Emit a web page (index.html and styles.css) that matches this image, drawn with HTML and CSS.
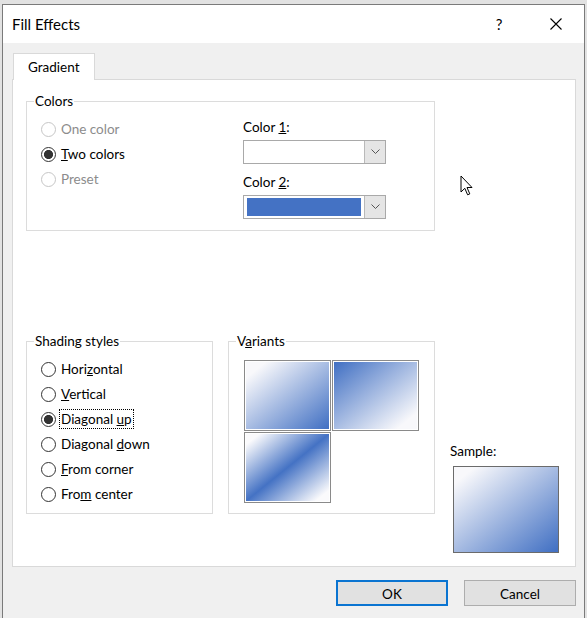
FILE: index.html
```html
<!DOCTYPE html>
<html lang="en">
<head>
    <meta charset="UTF-8">
    <title>Fill Effects</title>
    <link rel="stylesheet" href="styles.css">
</head>
<body>
    <div class="window">
        <div class="titlebar">
            <span class="title">Fill Effects</span>
            <span class="help">?</span>
            <svg class="close" width="12" height="12" viewBox="0 0 12 12">
                <path d="M0.5 0.5 L11.5 11.5 M11.5 0.5 L0.5 11.5" stroke="#000" stroke-width="1.1" fill="none"/>
            </svg>
        </div>

        <div class="content">
            <div class="tab">Gradient</div>

            <div class="panel">
                <fieldset class="group colors">
                    <legend>Colors</legend>
                    <div class="colors-body">
                        <div class="radios">
                            <div class="radio disabled"><span class="dot"></span>One color</div>
                            <div class="radio checked"><span class="dot"></span><span><u>T</u>wo colors</span></div>
                            <div class="radio disabled"><span class="dot"></span>Preset</div>
                        </div>
                        <div class="pickers">
                            <div class="field-label">Color <u>1</u>:</div>
                            <div class="combo">
                                <span class="swatch"></span>
                                <span class="combo-btn">
                                    <svg width="9" height="5" viewBox="0 0 9 5"><path d="M0.5 0.5 L4.5 4.5 L8.5 0.5" stroke="#555" fill="none"/></svg>
                                </span>
                            </div>
                            <div class="field-label second">Color <u>2</u>:</div>
                            <div class="combo">
                                <span class="swatch blue"></span>
                                <span class="combo-btn">
                                    <svg width="9" height="5" viewBox="0 0 9 5"><path d="M0.5 0.5 L4.5 4.5 L8.5 0.5" stroke="#555" fill="none"/></svg>
                                </span>
                            </div>
                        </div>
                    </div>
                </fieldset>

                <div class="lower">
                    <fieldset class="group shading">
                        <legend>Shading styles</legend>
                        <div class="shading-body">
                            <div class="radio"><span class="dot"></span><span>Hori<u>z</u>ontal</span></div>
                            <div class="radio"><span class="dot"></span><span><u>V</u>ertical</span></div>
                            <div class="radio checked"><span class="dot"></span><span class="focus">Diagonal <u>u</u>p</span></div>
                            <div class="radio"><span class="dot"></span><span>Diagonal <u>d</u>own</span></div>
                            <div class="radio"><span class="dot"></span><span><u>F</u>rom corner</span></div>
                            <div class="radio"><span class="dot"></span><span>Fro<u>m</u> center</span></div>
                        </div>
                    </fieldset>

                    <fieldset class="group variants">
                        <legend>V<u>a</u>riants</legend>
                        <div class="tiles">
                            <div class="tile up"></div>
                            <div class="tile down"></div>
                            <div class="tile band"></div>
                        </div>
                    </fieldset>

                    <div class="sample">
                        <div class="sample-label">Sample:</div>
                        <div class="sample-box"></div>
                    </div>
                </div>

                <svg class="cursor" width="13" height="22" viewBox="0 0 13 22">
                    <path d="M1 1 L1 17 L4.8 13.3 L7.6 19.8 L9.8 18.9 L7 12.5 L12 12.5 Z" fill="#fff" stroke="#000" stroke-width="1" stroke-linejoin="miter"/>
                </svg>
            </div>

            <div class="buttons">
                <button class="btn default">OK</button>
                <button class="btn">Cancel</button>
            </div>
        </div>
    </div>
</body>
</html>
```

FILE: styles.css
```css
:root {
    --face: #f0f0f0;
    --line: #dcdcdc;
    --blue: #4472c4;
    --text: #000;
    --muted: #8c8c8c;
}
* {
    box-sizing: border-box;
}
body {
    margin: 0;
    height: 618px;
    overflow: hidden;
    background-color: #e2e2e2;
    font-family: Lato, "Noto Sans", sans-serif;
    font-size: 13.5px;
    color: var(--text);
}
.window {
    margin: 4px 0 0 2px;
    width: 583px;
    height: 640px;
    border: 1px solid #7a7a7a;
    background-color: var(--face);
}
.titlebar {
    height: 38px;
    background-color: #fff;
    display: flex;
    align-items: center;
}
.title {
    padding-left: 9px;
    font-size: 15px;
}
.help {
    margin-left: auto;
    width: 10px;
    text-align: center;
    font-size: 15px;
}
.close {
    margin-left: 46px;
    margin-right: 22px;
}
.content {
    padding: 10px 0 0 9px;
}
.tab {
    position: relative;
    z-index: 1;
    margin-left: 1px;
    margin-bottom: -1px;
    width: 82px;
    height: 27px;
    padding-left: 14px;
    line-height: 26px;
    background-color: #fff;
    border: 1px solid #d9d9d9;
    border-bottom: 0;
}
.panel {
    position: relative;
    width: 564px;
    height: 488px;
    padding: 12px 0 0 13px;
    background-color: #fff;
    border: 1px solid #d9d9d9;
}

/* group boxes */
.group {
    margin: 0;
    padding: 0;
    min-width: 0;
    border: 1px solid var(--line);
}
.group legend {
    margin-left: 7px;
    padding: 0 1px;
    line-height: 18px;
}
.colors {
    width: 409px;
    height: 139px;
}
.colors-body {
    display: flex;
    padding: 6.5px 0 0 14px;
}
.radios {
    width: 202px;
}
.radio {
    display: flex;
    align-items: center;
    gap: 5px;
    height: 25px;
}
.dot {
    width: 15px;
    height: 15px;
    border-radius: 50%;
    border: 1px solid #333;
    background-color: #fff;
}
.radio.checked .dot {
    background: radial-gradient(circle, #333 0, #333 4.2px, #fff 4.9px);
}
.radio.disabled {
    color: var(--muted);
}
.radio.disabled .dot {
    border-color: #c6c6c6;
}
.focus {
    margin-left: -2px;
    padding: 0 1px;
    line-height: 18px;
    border: 1px dotted #000;
}

/* color pickers */
.field-label {
    margin-top: 0;
    line-height: 20px;
}
.field-label.second {
    margin-top: 8px;
}
.combo {
    display: flex;
    margin-top: 3px;
    width: 143px;
    height: 24px;
    border: 1px solid #a9a9a9;
    background-color: #fff;
}
.swatch {
    flex: 1;
    margin: 2px 3px;
}
.swatch.blue {
    background-color: var(--blue);
}
.combo-btn {
    width: 21px;
    display: flex;
    align-items: center;
    justify-content: center;
    background-color: #e5e5e5;
    border-left: 1px solid #b9b9b9;
}

/* lower row */
.lower {
    display: flex;
    gap: 15px;
    margin-top: 101px;
}
.shading {
    width: 187px;
    height: 182px;
}
.shading-body {
    padding: 6.5px 0 0 14px;
}
.variants {
    width: 207px;
    height: 182px;
}
.tiles {
    display: grid;
    grid-template-columns: 87px 87px;
    grid-auto-rows: 71px;
    gap: 1px;
    padding: 10px 0 0 15px;
}
.tile {
    border: 1px solid #8a8a8a;
    padding: 1px;
}
.tile.up {
    background: linear-gradient(to bottom right, #f8f8fb 12%, var(--blue) 98%) content-box, #fff;
}
.tile.down {
    background: linear-gradient(to bottom right, var(--blue) 2%, #f8f8fb 88%) content-box, #fff;
}
.tile.band {
    background: linear-gradient(to bottom right, #fafafc 8%, var(--blue) 50%, #fafafc 92%) content-box, #fff;
}
.sample {
    margin-top: 110.5px;
}
.sample-label {
    line-height: 17px;
}
.sample-box {
    margin: 6.5px 0 0 3px;
    width: 106px;
    height: 87px;
    border: 1px solid #6b6b6b;
    background: linear-gradient(to bottom right, #f8f8fb 10%, var(--blue) 98%);
}
.cursor {
    position: absolute;
    left: 447px;
    top: 95px;
}

/* dialog buttons */
.buttons {
    display: flex;
    justify-content: flex-end;
    gap: 16px;
    width: 564px;
    margin-top: 13px;
}
.btn {
    width: 112px;
    height: 26px;
    padding: 1px 0 0;
    font-family: inherit;
    font-size: 13.5px;
    color: var(--text);
    background-color: #e1e1e1;
    border: 1px solid #adadad;
}
.btn.default {
    border: 2px solid #0a74d1;
}
```
